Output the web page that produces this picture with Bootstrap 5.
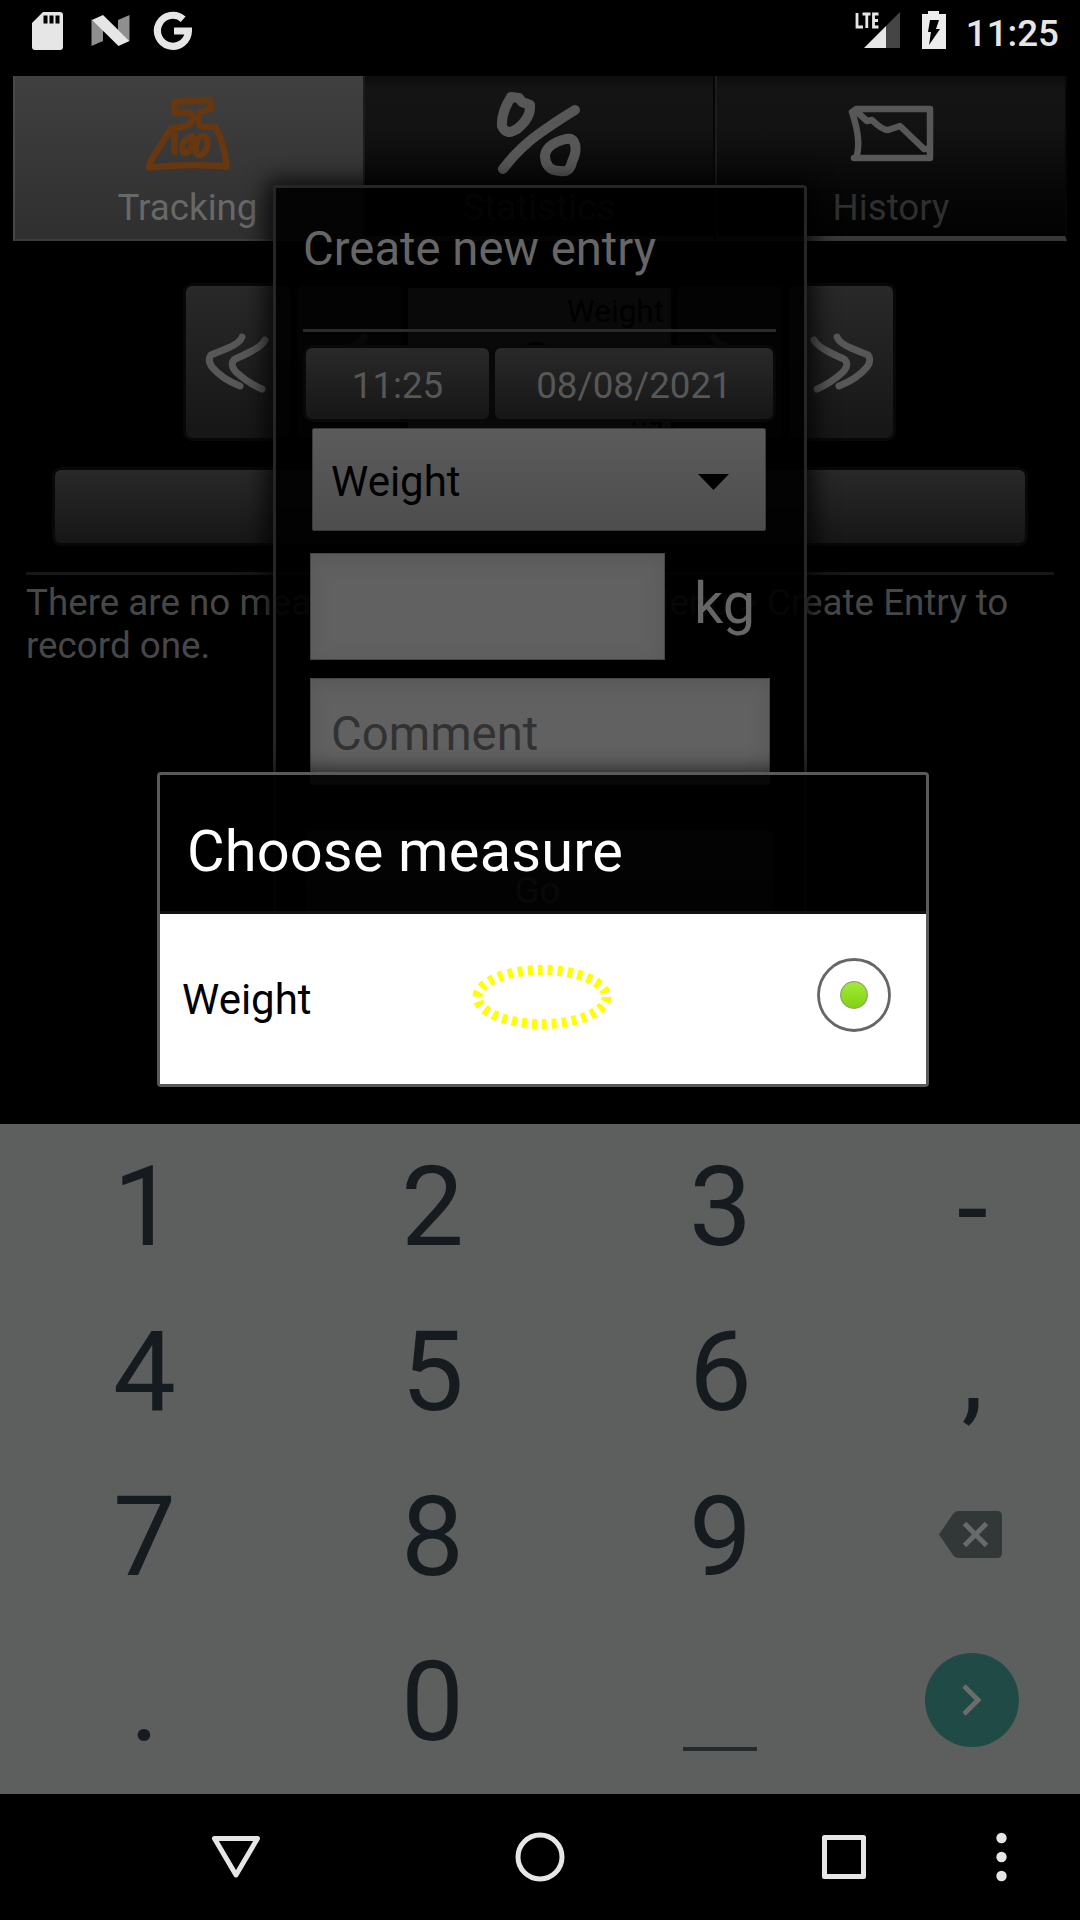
<!DOCTYPE html>
<html lang="en">
<head>
<meta charset="utf-8">
<meta name="viewport" content="width=device-width, initial-scale=1">
<title>Choose measure</title>
<link href="https://cdn.jsdelivr.net/npm/bootstrap@5.3.0/dist/css/bootstrap.min.css" rel="stylesheet">
<style>
body{font-family:Roboto,"Liberation Sans",sans-serif;font-size:36.75px;line-height:43px;background:#000;color:#474747}
svg{display:block;flex:none;overflow:visible}
.screen{width:1080px;height:1920px;overflow:hidden}
.statusbar{height:76px;color:#e6e6e6;font-weight:500;padding:0 21px 14px 32px}
.tabs{margin:0 13px;height:165px}
.tab-item{width:352px;padding-top:12px;background:linear-gradient(#0d0d0d,#141414 8%,#131313 30%,#060606 75%,#020202);border-left:2px solid #1c1c1c;border-right:2px solid #060606;border-bottom:5px solid #383838;color:#2f2f2f}
.tab-item.active{width:350px;padding-right:3px;background:linear-gradient(#404040,#2f2f2f);color:#686868;border:0;border-left:2px solid #484848;border-bottom:2px solid #3c3c3c}
.tab-item .ico{height:98px}
.dark-btn{background:linear-gradient(#292929,#161616);border-radius:6px;box-shadow:0 0 0 3px #080808;color:#575757}
.stepper{padding:45px 0 0 186px;height:197px}
.stepper .dark-btn{width:104px;height:152px;margin-right:7px}
.readout{width:263px;height:149px;margin:2px 7px 0 0;background:#616161;color:#000;font-size:31.5px;padding:2px 7px 4px 0}
.readout-value{font-size:57.75px;line-height:60px}
.create-btn{margin:32px 55px 0;height:73px}
.rule{height:3px;background:#171717;margin:29px 26px 0}
.notice{margin:6px 26px 0}
.entry-dialog{left:273px;top:185px;width:534px;height:745px;border:3px solid #262626;border-radius:4px;background:rgba(0,0,0,.91);box-shadow:0 2px 22px 8px rgba(0,0,0,.75);color:#666}
.entry-title{font-size:47.25px;line-height:56px;padding:33px 0 0 27px;height:141px}
.entry-rule{height:3px;background:#2a2a2a;margin:0 28px 0 27px}
.entry-body{padding:16px 31px 0 30px}
.time-btn{width:183px;height:71px}.date-btn{width:278px;height:71px}
.measure-select{width:454px;height:103px;margin:9px 0 22px 6px;padding:4px 36px 0 18px;background:linear-gradient(#5b5b5b,#4d4d4d);border:1px solid #3a3a3a;border-radius:2px;color:#000;font-size:42px}
.field{background:#616161;border:1px solid #464646;box-shadow:inset 0 5px 18px rgba(70,70,70,.35);height:107px;margin-left:4px}
.field-value{width:355px}.unit{font-size:57.75px;margin-left:29px;margin-top:-6px}
.field-comment{width:460px;margin-top:18px;color:#323232;font-size:47.25px;padding:5px 0 0 20px}
.go-btn{height:100px;margin-top:45px;padding:20px 4px 0 0}
.choose-dialog{left:157px;top:772px;width:772px;height:315px;border:3px solid #5a5a5a;border-radius:4px;background:rgba(0,0,0,.91);box-shadow:0 2px 20px 5px rgba(0,0,0,.6);color:#fff}
.choose-title{height:139px;font-size:57.75px;line-height:68px;padding:42px 0 0 27px;letter-spacing:.15px;border-bottom:3px solid #111}
.choice{height:170px;background:#fff;color:#000;font-size:42px;padding:0 35px 8px 22px}
.pick-mark{margin:4px 44px 0 0}
.keypad{height:670px;margin-top:432px;background:#5d5f5e}
.keys{display:grid;grid-template-columns:288px 288px 288px 216px;grid-auto-rows:165px;margin-top:-2px;font-size:112px;line-height:132px;color:#161b1f}
.keys .digit{padding:4px 0 0 1px}
.keys .dash-key{padding-top:8px}
.upper{height:616px}
.space-key{width:74px;height:4px;background:#252b2d;margin-top:98px}
.go-key{width:94px;height:94px;background:#204a45}
.navbar-sys{height:126px}
</style>
</head>
<body>
<main class="screen position-relative d-flex flex-column">
 <header class="statusbar d-flex align-items-center justify-content-between">
  <div class="d-flex align-items-center">
   <svg width="160" height="40" viewBox="32 12 160 40">
    <path d="M43 13h17q3 0 3 3v32q0 3-3 3H35q-3 0-3-3V24z" fill="#e6e6e6"/><path d="M43.500 16.500h4v8h-4zM49.500 16.500h4v8h-4zM55.500 16.500h4v8h-4z" fill="#000"/>
    <path d="M91.500 20v27l11.500-5V31zM129.500 16v26L118 31V21z" fill="#8f8f8f"/><path d="M92 21l11-5 26.500 26-11 5z" fill="#e6e6e6"/>
    <path d="M183.200 20.200A15.500 15.500 0 1 0 188.400 32H174" fill="none" stroke="#e6e6e6" stroke-width="7.200"/>
   </svg>
  </div>
  <div class="d-flex align-items-center">
   <svg width="91" height="40" viewBox="855 12 91 40">
    <path d="M857 14v14h6M862.500 15h8M866.800 15v14M878.500 15H873.500v13h5M873.500 21.500h4.500" fill="none" stroke="#e6e6e6" stroke-width="2.800"/>
    <path d="M864 49h22V27z" fill="#e6e6e6"/><path d="M886 49h14V13l-14 14z" fill="#454545"/>
    <path d="M922 15h6v-3h11v3h7v35h-24z" fill="#ececec"/><path d="M930 21h9l-3 9h4l-11 16 2-13h-3z" fill="#000"/>
   </svg>
   <span class="ms-3 ps-1 pt-1">11:25</span>
  </div>
 </header>

 <section class="upper">
  <nav class="tabs d-flex">
   <div class="tab-item active d-flex flex-column align-items-center">
    <div class="ico"><svg width="84" height="92" viewBox="0 -8 84 92" fill="none" stroke="#67370f" stroke-linecap="round" stroke-linejoin="round"><path d="M27.700 6L64 4 65.500 12.500 54 16Q50 23 55 30.500L69.300 31Q78 45 80.500 70.500Q42 67 3 71.500L4.500 65 25 32.500 40 30Q45 28 46.500 23Q47 16 41 16.500L29.300 17Z" stroke-width="6.500"/><path d="M28.400 39v17M47 42c-10-2-14 13-8 15 7 0 9-14 7-17M57 40c-8 1-10 18-4 19 9 0 12-18 4-19z" stroke-width="6.500"/></svg></div>
    <span>Tracking</span>
   </div>
   <div class="tab-item d-flex flex-column align-items-center">
    <div class="ico"><svg width="84" height="84" viewBox="497 88 84 84" fill="none" stroke="#575757" stroke-width="10" stroke-linecap="round" stroke-linejoin="round"><path d="M511 97Q501 113 502 126Q506 136 517 129Q531 118 530 105L522 102 519 98ZM503 169Q520 147 540 133T575 110M566 139Q546 144 545 156C545 165 550 171 560 171Q570 173 572 162Q578 149 574 142Q572 138 566 139Z"/></svg></div>
    <span>Statistics</span>
   </div>
   <div class="tab-item d-flex flex-column align-items-center">
    <div class="ico"><svg width="84" height="84" viewBox="849 88 84 84" fill="none" stroke="#575757" stroke-width="6.500" stroke-linecap="round" stroke-linejoin="round"><path d="M852 112L856 109H930V158H854M852 112Q862 142 856 158M856 111L867 121 872 120Q882 130 888 130L900 126 924 149H930"/></svg></div>
    <span>History</span>
   </div>
  </nav>
  <div class="stepper d-flex">
   <div class="dark-btn"><svg width="104" height="152" viewBox="186 286 104 152" fill="none" stroke="#575757" stroke-width="7" stroke-linecap="round"><path id="dbl" d="M242 337Q240 343 228 348T211 355Q207 360 212 367 222 379 240 386M265 340Q262 346 250 352T235 359Q229 364 236 372 248 383 262 389"/></svg></div>
   <div class="dark-btn"><svg width="104" height="152" viewBox="186 286 104 152" fill="none" stroke="#575757" stroke-width="7" stroke-linecap="round"><path d="M253 337Q250 343 238 348T221 355Q217 360 222 367 232 379 250 386"/></svg></div>
   <div class="readout d-flex flex-column align-items-end"><span>Weight</span><strong class="align-self-center readout-value">0</strong><span class="mt-auto">kg</span></div>
   <div class="dark-btn"><svg width="104" height="152" viewBox="790 286 104 152" fill="none" stroke="#575757" stroke-width="7" stroke-linecap="round"><path d="M826 337Q829 343 841 348T858 355Q862 360 857 367 847 379 829 386"/></svg></div>
   <div class="dark-btn"><svg width="104" height="152" viewBox="790 286 104 152"><use href="#dbl" transform="matrix(-1 0 0 1 1080 0)" fill="none" stroke="#575757" stroke-width="7" stroke-linecap="round"/></svg></div>
  </div>
  <div class="dark-btn create-btn"></div>
  <div class="rule"></div>
  <p class="notice">There are no measurements. Choose Menu &gt; Create Entry to record one.</p>
 </section>

 <section class="entry-dialog position-absolute">
  <div class="entry-title">Create new entry</div>
  <div class="entry-rule"></div>
  <div class="entry-body">
   <div class="d-flex justify-content-between">
    <div class="dark-btn time-btn d-flex align-items-center justify-content-center pt-1">11:25</div>
    <div class="dark-btn date-btn d-flex align-items-center justify-content-center pt-1">08/08/2021</div>
   </div>
   <div class="measure-select d-flex align-items-center justify-content-between"><span>Weight</span><svg width="31" height="16" viewBox="0 0 31 16"><path d="M0 0h31L15.500 16z"/></svg></div>
   <div class="d-flex align-items-center"><div class="field field-value"></div><span class="unit">kg</span></div>
   <div class="field field-comment d-flex align-items-center">Comment</div>
   <div class="dark-btn go-btn d-flex align-items-center justify-content-center">Go</div>
  </div>
 </section>

 <section class="choose-dialog position-absolute">
  <div class="choose-title">Choose measure</div>
  <div class="choice d-flex align-items-center justify-content-between">
   <span class="pt-2">Weight</span>
   <svg width="140" height="66" viewBox="-70 -33 140 66" class="pick-mark"><ellipse rx="64.500" ry="27" fill="none" stroke="#ff0" stroke-width="10" stroke-dasharray="5 5"/></svg>
   <svg width="74" height="74" viewBox="-37 -37 74 74"><defs><linearGradient id="dot" x2="0" y2="1"><stop stop-color="#a3ea37"/><stop offset="1" stop-color="#80d315"/></linearGradient></defs><circle r="35.500" fill="none" stroke="#666" stroke-width="2.800"/><circle r="13.300" fill="url(#dot)" stroke="#91a56f" stroke-width="1.300"/></svg>
  </div>
 </section>

 <section class="keypad">
  <div class="keys text-center">
   <div class="digit d-flex align-items-center justify-content-center">1</div><div class="digit d-flex align-items-center justify-content-center">2</div><div class="digit d-flex align-items-center justify-content-center">3</div><div class="digit dash-key d-flex align-items-center justify-content-center">-</div>
   <div class="digit d-flex align-items-center justify-content-center">4</div><div class="digit d-flex align-items-center justify-content-center">5</div><div class="digit d-flex align-items-center justify-content-center">6</div><div class="digit d-flex align-items-center justify-content-center">,</div>
   <div class="digit d-flex align-items-center justify-content-center">7</div><div class="digit d-flex align-items-center justify-content-center">8</div><div class="digit d-flex align-items-center justify-content-center">9</div>
   <div class="d-flex align-items-center justify-content-center pe-1"><svg width="63" height="47" viewBox="0 0 63 47"><path d="M19 0H58q5 0 5 5V42q0 5-5 5H19q-3 0-5-3L0 23.500 14 3q2-3 5-3z" fill="#323738"/><path d="M25.500 12.500l22 22m0-22l-22 22" stroke="#686a69" stroke-width="5"/></svg></div>
   <div class="digit d-flex align-items-center justify-content-center">.</div><div class="digit d-flex align-items-center justify-content-center">0</div>
   <div class="d-flex align-items-center justify-content-center"><span class="space-key"></span></div>
   <div class="d-flex align-items-center justify-content-center"><span class="go-key rounded-circle d-flex align-items-center justify-content-center"><svg width="20" height="32" viewBox="0 0 20 32"><path d="M2 2l14 14L2 30" fill="none" stroke="#6c6c6c" stroke-width="5"/></svg></span></div>
  </div>
 </section>

 <footer class="navbar-sys">
  <svg width="1080" height="126" viewBox="0 1794 1080 126" fill="none" stroke="#e6e6e6" stroke-linejoin="round">
   <path d="M214.500 1838.500h43L236 1875z" stroke-width="5"/><circle cx="540" cy="1857" r="22" stroke-width="5"/><rect x="824.500" y="1837.500" width="39" height="39" stroke-width="5"/>
   <g fill="#e6e6e6" stroke="none"><circle cx="1001.500" cy="1838" r="5.200"/><circle cx="1001.500" cy="1857" r="5.200"/><circle cx="1001.500" cy="1876" r="5.200"/></g>
  </svg>
 </footer>
</main>
<script src="https://cdn.jsdelivr.net/npm/bootstrap@5.3.0/dist/js/bootstrap.bundle.min.js"></script>
</body>
</html>
